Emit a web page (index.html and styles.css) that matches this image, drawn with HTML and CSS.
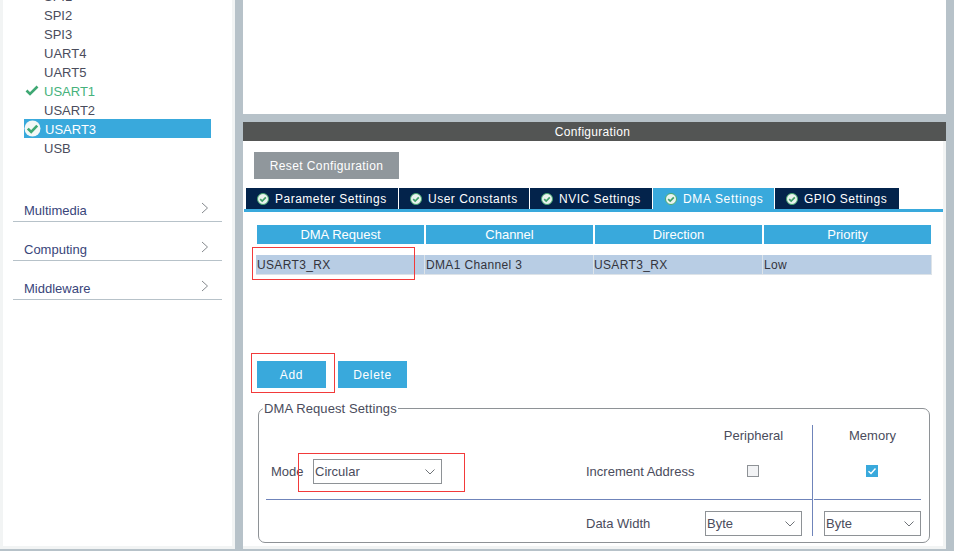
FILE: index.html
```html
<!DOCTYPE html>
<html lang="en">
<head>
<meta charset="utf-8">
<title>DMA Settings</title>
<link rel="stylesheet" href="styles.css">
</head>
<body>
<svg class="defs" width="0" height="0" aria-hidden="true">
  <symbol id="tab-check" viewBox="0 0 12 12">
    <circle cx="6" cy="6" r="5.5" fill="#e9f3ee" stroke="#46a86f" stroke-width="1"/>
    <path d="M3.2 6.1 5.2 8 8.8 4.3" fill="none" stroke="#3f9f68" stroke-width="1.7"/>
  </symbol>
  <symbol id="chev-down" viewBox="0 0 10 6">
    <path d="M.5 .5 5 5 9.500 .5" fill="none" stroke="#6f7378" stroke-width="1"/>
  </symbol>
</svg>
<div class="app">
  <aside class="sidebar">
    <ul class="periph-list">
      <li class="periph">SPI1</li>
      <li class="periph">SPI2</li>
      <li class="periph">SPI3</li>
      <li class="periph">UART4</li>
      <li class="periph">UART5</li>
      <li class="periph periph-ok">
        <svg class="ok-mark" width="14" height="11" viewBox="0 0 14 11"><path d="M1.500 5.500 5 9 12.500 1.500" fill="none" stroke="#3fa873" stroke-width="2.600"/></svg>
        USART1
      </li>
      <li class="periph">USART2</li>
      <li class="periph periph-selected">
        <svg class="ok-disc" width="17" height="17" viewBox="0 0 17 17"><circle cx="8.500" cy="8.500" r="8" fill="#f4f8f6"/><path d="M3.800 8.600 7.200 12 13.200 5.600" fill="none" stroke="#3fa873" stroke-width="2.600"/></svg>
        USART3
      </li>
      <li class="periph">USB</li>
    </ul>
    <div class="category">Multimedia<svg class="chev" width="8" height="12" viewBox="0 0 8 12"><path d="M1 1 6.500 6 1 11" fill="none" stroke="#85898e" stroke-width="1"/></svg></div>
    <div class="category">Computing<svg class="chev" width="8" height="12" viewBox="0 0 8 12"><path d="M1 1 6.500 6 1 11" fill="none" stroke="#85898e" stroke-width="1"/></svg></div>
    <div class="category">Middleware<svg class="chev" width="8" height="12" viewBox="0 0 8 12"><path d="M1 1 6.500 6 1 11" fill="none" stroke="#85898e" stroke-width="1"/></svg></div>
  </aside>

  <main class="main">
    <section class="top-panel"></section>
    <section class="config">
      <header class="config-title">Configuration</header>
      <div class="config-toolbar">
        <button class="btn btn-grey" type="button">Reset Configuration</button>
      </div>
      <nav class="tabs">
        <div class="tab tab-w1"><svg class="tab-icon"><use href="#tab-check"/></svg><span class="tab-label">Parameter Settings</span></div>
        <div class="tab tab-w2"><svg class="tab-icon"><use href="#tab-check"/></svg><span class="tab-label">User Constants</span></div>
        <div class="tab tab-w3"><svg class="tab-icon"><use href="#tab-check"/></svg><span class="tab-label">NVIC Settings</span></div>
        <div class="tab tab-w3 tab-active"><svg class="tab-icon"><use href="#tab-check"/></svg><span class="tab-label">DMA Settings</span></div>
        <div class="tab tab-w4"><svg class="tab-icon"><use href="#tab-check"/></svg><span class="tab-label">GPIO Settings</span></div>
      </nav>
      <div class="tab-body">
        <div class="table">
          <div class="th">DMA Request</div>
          <div class="th">Channel</div>
          <div class="th">Direction</div>
          <div class="th">Priority</div>
          <div class="td">USART3_RX</div>
          <div class="td">DMA1 Channel 3</div>
          <div class="td td-tight">USART3_RX</div>
          <div class="td">Low</div>
          <span class="mark mark-row"></span>
        </div>
        <div class="actions">
          <button class="btn btn-blue" type="button">Add</button>
          <button class="btn btn-blue" type="button">Delete</button>
          <span class="mark mark-add"></span>
        </div>
        <fieldset class="dma-box">
          <legend>DMA Request Settings</legend>
          <div class="dma-grid">
            <div class="cell"></div>
            <div class="cell"></div>
            <div class="cell cell-p cell-head">Peripheral</div>
            <div class="cell cell-m cell-head">Memory</div>

            <div class="cell cell-line cell-mode">
              <span class="mode-label">Mode</span>
              <div class="select select-mode">Circular<svg class="select-arrow"><use href="#chev-down"/></svg></div>
              <span class="mark mark-mode"></span>
            </div>
            <div class="cell cell-line">Increment Address</div>
            <div class="cell cell-p cell-line cell-center"><span class="check"></span></div>
            <div class="cell cell-m cell-line cell-center">
              <span class="check check-on"><svg width="12" height="12" viewBox="0 0 12 12"><path d="M2.500 6.200 5 8.500 9.500 3.500" fill="none" stroke="#fff" stroke-width="1.400"/></svg></span>
            </div>

            <div class="cell"></div>
            <div class="cell cell-bottom cell-width">Data Width</div>
            <div class="cell cell-p cell-bottom"><div class="select">Byte<svg class="select-arrow"><use href="#chev-down"/></svg></div></div>
            <div class="cell cell-m cell-bottom"><div class="select">Byte<svg class="select-arrow"><use href="#chev-down"/></svg></div></div>
          </div>
        </fieldset>
      </div>
    </section>
  </main>
</div>
</body>
</html>
```

FILE: styles.css
```css
* { box-sizing: border-box; }
html, body { margin: 0; padding: 0; background: #fff; }
body {
  width: 963px;
  height: 553px;
  overflow: hidden;
  font-family: "Liberation Sans", Arial, sans-serif;
  font-size: 13px;
  color: #4a4c5c;
}
.defs { position: absolute; }

.app {
  display: flex;
  height: 551px;
  background: #b7c2c9;
  padding-bottom: 2px;
  width: 954px;
  gap: 8px;
}

/* Sidebar */
.sidebar {
  width: 235px;
  flex: none;
  background: #fff;
  border-left: 3px solid #f2f4f4;
  border-right: 3px solid #f2f4f4;
  border-bottom: 3px solid #f2f4f4;
  overflow: hidden;
}
.periph-list {
  list-style: none;
  margin: -14px 0 0;
  padding: 0;
}
.periph {
  height: 19px;
  line-height: 21px;
  margin-left: 21px;
  width: 187px;
  padding-left: 20px;
  position: relative;
  white-space: nowrap;
}
.periph-ok { color: #45b27c; }
.ok-mark { position: absolute; left: 1px; top: 4px; }
.periph-selected {
  background: #39a9dc;
  color: #fff;
  padding-left: 21px;
}
.ok-disc { position: absolute; left: 0; top: 1px; }

.category {
  height: 39px;
  margin-left: 10px;
  width: 209px;
  padding: 20px 0 0 11px;
  line-height: 16px;
  color: #39457a;
  border-bottom: 1px solid #b7c2c9;
  position: relative;
}
.periph-list + .category { margin-top: 26px; }
.chev { position: absolute; right: 13px; top: 19px; }

/* Main */
.main {
  width: 703px;
  flex: none;
  display: flex;
  flex-direction: column;
  gap: 8px;
}
.top-panel { height: 114px; background: #fff; flex: none; }
.config {
  flex: 1;
  background: #fff;
  border-right: 3px solid #f2f4f4;
  border-bottom: 3px solid #f2f4f4;
}
.config-title {
  height: 19px;
  line-height: 21px;
  background: #535554;
  color: #fff;
  font-size: 12px;
  letter-spacing: .3px;
  text-align: center;
  margin-right: -3px;
  padding-right: 4px;
}
.config-toolbar { padding: 11px 0 9px 11px; height: 47px; }

.btn {
  border: 0;
  padding: 0;
  height: 27px;
  color: #fff;
  font-family: inherit;
  font-size: 12px;
  letter-spacing: .65px;
}
.btn-grey { width: 145px; background: #90979c; letter-spacing: .4px; }
.btn-blue { width: 69px; background: #39a9dc; }

/* Tabs */
.tabs {
  display: flex;
  gap: 1px;
  height: 24px;
  margin-left: 1px;
  padding-left: 2px;
  border-bottom: 3px solid #39a9dc;
}
.tab {
  height: 21px;
  background: #03234b;
  color: #fff;
  font-size: 12px;
  letter-spacing: .5px;
  line-height: 21px;
  padding-left: 11px;
  white-space: nowrap;
  display: flex;
  align-items: center;
}
.tab-label { padding-top: 2px; }
.tab-w1 { width: 152px; }
.tab-w2 { width: 130px; }
.tab-w3 { width: 122px; }
.tab-w4 { width: 124px; }
.tab-w3.tab-active { width: 121px; }
.tab-active {
  background: #39a9dc;
  height: 24px;
  padding-bottom: 3px;
  padding-left: 12px;
  letter-spacing: .65px;
}
.tab-icon { width: 12px; height: 12px; margin-right: 6px; flex: none; }

/* Table */
.tab-body { padding: 13px 14px 0 13px; }
.table {
  display: grid;
  grid-template-columns: repeat(4, 169px);
  grid-template-rows: 19px 20px;
  row-gap: 11px;
  position: relative;
  width: 676px;
}
.th {
  margin: 0 1px;
  background: #39a9dc;
  color: #fff;
  text-align: center;
  line-height: 19px;
  font-size: 13px;
}
.td {
  background: #b8cde4;
  border-right: 1px solid #dde3e8;
  border-bottom: 1px solid #dde3e8;
  line-height: 20px;
  color: #33343c;
  font-size: 12px;
  letter-spacing: .35px;
  padding-left: 1px;
}
.td-tight { padding-left: 0; }
.mark {
  position: absolute;
  border: 1px solid #f23a3a;
  pointer-events: none;
}
.mark-row { left: -4px; top: 22px; width: 163px; height: 33px; }

.actions {
  display: flex;
  gap: 12px;
  margin: 86px 0 0 1px;
  position: relative;
}
.mark-add { left: -6px; top: -8px; width: 84px; height: 40px; }

/* DMA settings group */
.dma-box {
  margin: 13px 0 0 2px;
  padding: 0 8px 7px 7px;
  width: 672px;
  height: 142px;
  border: 1px solid #8e9296;
  border-radius: 7px;
  min-width: 0;
}
.dma-box legend {
  padding: 0 1px;
  margin-left: -3px;
  font-size: 13px;
  line-height: 15px;
  letter-spacing: .1px;
}
.dma-grid {
  display: grid;
  grid-template-columns: 320px 119px 108px 108px;
  grid-template-rows: 20px 55px 36px;
  margin-top: 9px;
}
.cell { display: flex; align-items: center; white-space: nowrap; position: relative; }
.cell-line { border-bottom: 1px solid #6f84ba; padding-bottom: 2px; }
.cell-p { border-right: 1px solid #6f84ba; padding-right: 10px; }
.cell-m { padding-left: 10px; margin-left: 1px; }
.cell-head { justify-content: center; }
.cell-center { justify-content: center; }
.cell-center .check { margin-right: 2px; }
.cell-bottom { align-items: flex-end; }
.cell-width { padding-bottom: 5px; }
.cell-mode { padding-left: 5px; }
.mode-label { width: 42px; flex: none; }
.mark-mode { left: 32px; top: 8px; width: 167px; height: 39px; }

.select {
  position: relative;
  flex: 1;
  height: 25px;
  line-height: 23px;
  padding-left: 1px;
  border: 1px solid #8e9296;
  background: #fff;
}
.select-mode { flex: none; width: 129px; }
.select-arrow {
  position: absolute;
  right: 6px;
  top: 9px;
  width: 10px;
  height: 6px;
}
.check {
  width: 12px;
  height: 12px;
  background: #f2f3f5;
  border: 1px solid #8e9296;
  display: block;
}
.check-on { background: #39a9dc; border: 0; }
.check-on svg { display: block; }
```
